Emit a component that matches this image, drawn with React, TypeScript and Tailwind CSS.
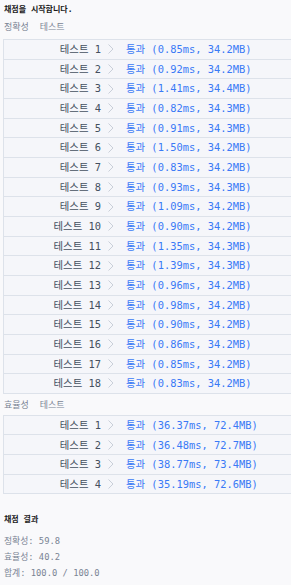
import React from "react";

const acc: [string, string][] = [
  ["0.85", "34.2"], ["0.92", "34.2"], ["1.41", "34.4"], ["0.82", "34.3"], ["0.91", "34.3"],
  ["1.50", "34.2"], ["0.83", "34.2"], ["0.93", "34.3"], ["1.09", "34.2"], ["0.90", "34.2"],
  ["1.35", "34.3"], ["1.39", "34.3"], ["0.96", "34.2"], ["0.98", "34.2"], ["0.90", "34.2"],
  ["0.86", "34.2"], ["0.85", "34.2"], ["0.83", "34.2"],
];
const eff: [string, string][] = [
  ["36.37", "72.4"], ["36.48", "72.7"], ["38.77", "73.4"], ["35.19", "72.6"],
];

function Chevron() {
  return (
    <svg width="6" height="10" viewBox="0 0 6 10" className="shrink-0">
      <polyline points="0.5,0.5 5,5 0.5,9.5" fill="none" stroke="#c9cfd9" strokeWidth="1" />
    </svg>
  );
}

function Row({ n, t, m }: { n: number; t: string; m: string }) {
  return (
    <div className="flex h-[19.67px] items-center border-b border-[#dde2ea] bg-[#f5f6fa] text-[10.4px] leading-none">
      <div className="w-[97px] shrink-0 whitespace-pre text-right text-[#44505f]">{`테스트 ${n}`}</div>
      <div className="ml-[7px]"><Chevron /></div>
      <div className="ml-[12px] whitespace-pre text-[#3a7af6]">{`통과 (${t}ms, ${m}MB)`}</div>
    </div>
  );
}

export default function App() {
  return (
    <div
      className="h-[585px] w-[291px] overflow-hidden bg-[#f9f9fb]"
      style={{ fontFamily: '"DejaVu Sans Mono", "Noto Sans CJK KR", monospace' }}
    >
      <div className="h-[20px] whitespace-pre pl-[4px] text-[8px] font-bold leading-[20px] text-[#1a1a1a]">
        채점을 시작합니다.
      </div>
      <div className="h-[14px] whitespace-pre pl-[4px] text-[9px] leading-[14px] text-[#7a8494]">
        정확성  테스트
      </div>
      <div className="ml-[3px] mt-[5px] w-[320px] border-l border-t border-[#dde2ea]">
        {acc.map(([t, m], i) => (
          <Row key={i} n={i + 1} t={t} m={m} />
        ))}
      </div>
      <div className="mt-[4px] h-[14px] whitespace-pre pl-[4px] text-[9px] leading-[14px] text-[#7a8494]">
        효율성  테스트
      </div>
      <div className="ml-[3px] mt-[3px] w-[320px] border-l border-t border-[#dde2ea]">
        {eff.map(([t, m], i) => (
          <Row key={i} n={i + 1} t={t} m={m} />
        ))}
      </div>
      <div className="mt-[18px] h-[16px] whitespace-pre pl-[4px] text-[8px] font-bold leading-[16px] text-[#1a1a1a]">
        채점 결과
      </div>
      <div className="mt-[5px] flex flex-col pl-[4px] text-[8.8px] text-[#7a8494]">
        <div className="h-[16px] whitespace-pre leading-[16px]">정확성: 59.8</div>
        <div className="h-[16px] whitespace-pre leading-[16px]">효율성: 40.2</div>
        <div className="h-[16px] whitespace-pre leading-[16px]">합계: 100.0 / 100.0</div>
      </div>
    </div>
  );
}
